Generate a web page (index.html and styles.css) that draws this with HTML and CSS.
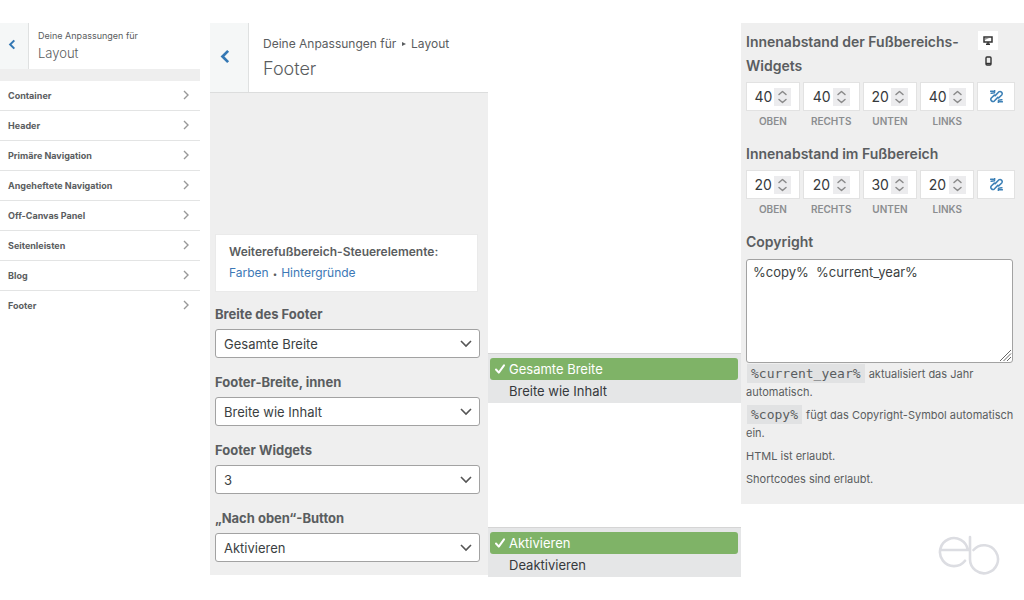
FILE: index.html
```html
<!DOCTYPE html>
<html lang="de">
<head>
<meta charset="utf-8">
<meta name="viewport" content="width=device-width, initial-scale=1">
<title>Layout – Footer</title>
<link rel="stylesheet" href="styles.css">
</head>
<body>
<svg class="defs" aria-hidden="true">
  <symbol id="back" viewBox="0 0 8 12"><path d="M6.5 1.5 2 6l4.5 4.5" fill="none" stroke="currentColor" stroke-width="2.2"/></symbol>
  <symbol id="next" viewBox="0 0 6 10"><path d="M1 1l4 4-4 4" fill="none" stroke="currentColor" stroke-width="1.4"/></symbol>
  <symbol id="tick" viewBox="0 0 10 10"><path d="M1 5.5 3.8 8.6 9 1.3" fill="none" stroke="currentColor" stroke-width="2" stroke-linecap="round" stroke-linejoin="round"/></symbol>
  <symbol id="step" viewBox="0 0 17 18"><path d="M5 6.5 8.5 3.5 12 6.5M5 11.5l3.5 3 3.5-3" fill="none" stroke="currentColor" stroke-width="1.5" stroke-linecap="round" stroke-linejoin="round"/></symbol>
  <symbol id="unlink" viewBox="0 0 12 12"><path d="M4.8 5.2 8 1.8a2 2 0 0 1 2.8 2.800L8 7.300M7.200 6.800 4 10.200a2 2 0 0 1-2.800-2.800L4 4.700M.6 1.200h2.600M1 3l2-.2M4.300.6l-.2 2M11.400 10.800H8.800M11 9l-2 .2M7.700 11.400l.2-2" fill="none" stroke="currentColor" stroke-width="1.4" stroke-linecap="round"/></symbol>
</svg>
<main class="board">
  <section class="panel sections">
    <header class="head head-small">
      <button class="back" type="button" aria-label="Zurück"><svg class="back-icon"><use href="#back"/></svg></button>
      <div class="titles"><p class="crumb">Deine Anpassungen für</p><h1 class="title">Layout</h1></div>
    </header>
    <nav class="list">
      <a class="item" href="#">Container<svg class="next"><use href="#next"/></svg></a>
      <a class="item" href="#">Header<svg class="next"><use href="#next"/></svg></a>
      <a class="item" href="#">Primäre Navigation<svg class="next"><use href="#next"/></svg></a>
      <a class="item" href="#">Angeheftete Navigation<svg class="next"><use href="#next"/></svg></a>
      <a class="item" href="#">Off-Canvas Panel<svg class="next"><use href="#next"/></svg></a>
      <a class="item" href="#">Seitenleisten<svg class="next"><use href="#next"/></svg></a>
      <a class="item" href="#">Blog<svg class="next"><use href="#next"/></svg></a>
      <a class="item" href="#">Footer<svg class="next"><use href="#next"/></svg></a>
    </nav>
  </section>

  <section class="panel footer-panel">
    <header class="head head-large">
      <button class="back" type="button" aria-label="Zurück"><svg class="back-icon"><use href="#back"/></svg></button>
      <div class="titles"><p class="crumb">Deine Anpassungen für <svg class="caret" viewBox="0 0 4 6"><path d="M0 1v4l4-2z" fill="currentColor"/></svg> Layout</p><h2 class="title">Footer</h2></div>
    </header>
    <div class="controls">
      <div class="note">
        <strong>Weiterefußbereich-Steuerelemente:</strong>
        <p class="links"><a href="#">Farben</a><span class="dot">•</span><a href="#">Hintergründe</a></p>
      </div>
      <div class="field"><label class="label" for="width">Breite des Footer</label><select class="select" id="width"><option>Gesamte Breite</option><option>Breite wie Inhalt</option></select></div>
      <div class="field"><label class="label" for="inner">Footer-Breite, innen</label><select class="select" id="inner"><option>Breite wie Inhalt</option><option>Gesamte Breite</option></select></div>
      <div class="field"><label class="label" for="widgets">Footer Widgets</label><select class="select" id="widgets"><option>3</option></select></div>
      <div class="field"><label class="label" for="top">„Nach oben“-Button</label><select class="select" id="top"><option>Aktivieren</option><option>Deaktivieren</option></select></div>
    </div>
  </section>

  <section class="menus">
    <div class="menu" role="listbox" aria-label="Breite">
      <div class="option chosen" role="option" aria-selected="true"><svg class="tick"><use href="#tick"/></svg>Gesamte Breite</div>
      <div class="option" role="option" aria-selected="false">Breite wie Inhalt</div>
    </div>
    <div class="menu" role="listbox" aria-label="Nach oben">
      <div class="option chosen" role="option" aria-selected="true"><svg class="tick"><use href="#tick"/></svg>Aktivieren</div>
      <div class="option" role="option" aria-selected="false">Deaktivieren</div>
    </div>
  </section>

  <div class="right">
    <section class="panel spacing">
      <div class="spacing-head">
        <h3 class="heading">Innenabstand der Fußbereichs-Widgets</h3>
        <div class="devices">
          <button class="device active" type="button" aria-label="Desktop"><svg width="10" height="9" viewBox="0 0 10 9"><path d="M1 1h8v5H1zM3 8.300h4M5 6v2" fill="none" stroke="currentColor" stroke-width="1.500"/><path d="M2 4l4-2H2z" fill="#999"/></svg></button>
          <button class="device" type="button" aria-label="Mobil"><svg width="7" height="10" viewBox="0 0 7 10"><rect x="1" y="1" width="5" height="8" rx="1" fill="none" stroke="currentColor" stroke-width="1.400"/><path d="M1 7.500h5" stroke="currentColor" stroke-width="1.400"/></svg></button>
        </div>
      </div>
      <div class="values">
        <div class="cell"><div class="box"><input class="number" id="a1" type="number" value="40"><svg class="step"><use href="#step"/></svg></div><label for="a1">OBEN</label></div>
        <div class="cell"><div class="box"><input class="number" id="a2" type="number" value="40"><svg class="step"><use href="#step"/></svg></div><label for="a2">RECHTS</label></div>
        <div class="cell"><div class="box"><input class="number" id="a3" type="number" value="20"><svg class="step"><use href="#step"/></svg></div><label for="a3">UNTEN</label></div>
        <div class="cell"><div class="box"><input class="number" id="a4" type="number" value="40"><svg class="step"><use href="#step"/></svg></div><label for="a4">LINKS</label></div>
        <button class="box unlink" type="button" aria-label="Werte verknüpfen"><svg width="13" height="13"><use href="#unlink"/></svg></button>
      </div>
      <h3 class="heading next-heading">Innenabstand im Fußbereich</h3>
      <div class="values">
        <div class="cell"><div class="box"><input class="number" id="b1" type="number" value="20"><svg class="step"><use href="#step"/></svg></div><label for="b1">OBEN</label></div>
        <div class="cell"><div class="box"><input class="number" id="b2" type="number" value="20"><svg class="step"><use href="#step"/></svg></div><label for="b2">RECHTS</label></div>
        <div class="cell"><div class="box"><input class="number" id="b3" type="number" value="30"><svg class="step"><use href="#step"/></svg></div><label for="b3">UNTEN</label></div>
        <div class="cell"><div class="box"><input class="number" id="b4" type="number" value="20"><svg class="step"><use href="#step"/></svg></div><label for="b4">LINKS</label></div>
        <button class="box unlink" type="button" aria-label="Werte verknüpfen"><svg width="13" height="13"><use href="#unlink"/></svg></button>
      </div>
      <label class="heading next-heading" for="copy">Copyright</label>
      <div class="area"><textarea class="text" id="copy">%copy%  %current_year%</textarea><svg class="grip" viewBox="0 0 13 13"><path d="M1 12 12 1M4.500 12 12 4.500M8 12l4-4" fill="none" stroke="#666"/></svg></div>
      <div class="help">
        <p><code>%current_year%</code> aktualisiert das Jahr automatisch.</p>
        <p><code>%copy%</code> fügt das Copyright-Symbol automatisch ein.</p>
        <p>HTML ist erlaubt.</p>
        <p>Shortcodes sind erlaubt.</p>
      </div>
    </section>
    <svg class="logo" viewBox="0 0 62 40" role="img" aria-label="eb"><path d="M2.200 15H29.800A14 14 0 1 0 27 25.700M32 2v22A14 14 0 1 0 35.500 15" fill="none" stroke="#dcdde2" stroke-width="2.600" stroke-linecap="round" stroke-linejoin="round"/></svg>
  </div>
</main>
</body>
</html>
```
FILE: styles.css
```css
* { box-sizing: border-box; }
body { margin: 0; background: #fff; color: #5a5d60; font-family: Inter, "Liberation Sans", sans-serif; }
h1, h2, h3, p { margin: 0; }
button { border: 0; padding: 0; font: inherit; }
.defs { display: none; }
.board { display: grid; grid-template-columns: 210fr 278fr 253fr 283fr; align-items: start; padding-top: 23px; }
.sections { margin-right: 10px; }

.head { display: flex; background: #fff; }
.back { display: flex; align-items: center; background: #f5f7f7; border-right: 1px solid #dfe1e1; color: #3478b4; }
.titles { display: flex; flex-direction: column; }
.title { font-weight: 300; }
.head-small { height: 46px; }
.head-small .back { width: 29px; padding-left: 8px; padding-bottom: 3px; }
.head-small .back-icon { width: 8px; height: 11px; }
.head-small .titles { padding: 5px 0 0 9px; }
.head-small .crumb { font-size: 9px; line-height: 16px; }
.head-small .title { font-size: 13px; line-height: 18px; }
.head-large { height: 70px; border-bottom: 1px solid #dcdddd; }
.head-large .back { width: 39px; padding-left: 10px; padding-bottom: 3px; }
.head-large .back-icon { width: 10px; height: 15px; }
.head-large .titles { padding: 10px 0 0 14px; }
.head-large .crumb { font-size: 12px; line-height: 22px; }
.head-large .title { font-size: 18px; line-height: 28px; }
.caret { width: 4px; height: 6px; margin: 0 2px; vertical-align: 1px; }

.list { border-top: 12px solid #eee; }
.item { display: flex; justify-content: space-between; align-items: center; height: 30px; padding: 0 11px 1px 8px; border-bottom: 1px solid #e3e4e4; color: inherit; font-size: 9px; font-weight: 700; text-decoration: none; }
.item:last-child { padding-bottom: 2px; border-bottom: 0; }
.next { width: 6px; height: 10px; color: #999; }

.footer-panel, .spacing { background: #efefef; }
.controls { display: flex; flex-direction: column; gap: 14px; padding: 141px 8px 13px 5px; }
.note { margin-right: 2px; padding: 8px 13px; background: #fff; border: 1px solid #eaeaea; font-size: 12px; line-height: 18px; }
.note strong { font-weight: 600; }
.links { padding-top: 3px; }
.links a { color: #3c78b6; text-decoration: none; }
.dot { padding: 0 4px; font-size: 8px; }
.field { display: flex; flex-direction: column; gap: 5px; }
.field:nth-child(2) { margin-top: -2px; }
.label, .heading { font-weight: 600; }
.label { font-size: 13px; font-weight: 700; line-height: 20px; }
.select { appearance: none; height: 29px; padding: 0 8px; border: 1px solid #a2a2a2; border-radius: 3px; background: #fff url("data:image/svg+xml,%3Csvg xmlns='http://www.w3.org/2000/svg' width='12' height='8'%3E%3Cpath d='M1 1l5 5 5-5' fill='none' stroke='%23555' stroke-width='1.6'/%3E%3C/svg%3E") no-repeat right 7px center; color: #3b3f42; font-family: inherit; font-size: 13px; }

.menus { display: flex; flex-direction: column; gap: 124px; padding-top: 330px; }
.menu { padding: 4px 3px 3px 2px; border-top: 1px solid #d5d5d5; background: #e5e6e7; color: #36393c; font-size: 13px; }
.option { display: flex; align-items: center; height: 21px; padding-left: 19px; border-radius: 3px; }
.chosen { height: 22px; gap: 4px; padding-left: 5px; background: #7fb367; color: #fff; }
.menu { padding-bottom: 2px; }
.tick { width: 10px; height: 10px; }

.spacing { padding: 7px 9px 16px 5px; }
.spacing-head { display: flex; justify-content: space-between; align-items: flex-start; }
.heading { font-size: 14px; line-height: 24px; }
.next-heading { display: block; margin-top: 12px; }
.devices { display: flex; flex-direction: column; gap: 1px; padding: 1px 17px 0 0; }
.device { display: grid; place-items: center; width: 20px; height: 19px; background: none; color: #333; }
.device.active { background: #fff; }
.values { display: grid; grid-template-columns: 54fr 57fr 55fr 54fr 38fr; gap: 3px; align-items: start; padding-top: 4px; }
.cell { display: flex; flex-direction: column; min-width: 0; }
.cell label { padding-top: 2px; padding-bottom: 1px; color: #8b8d8f; font-size: 10px; font-weight: 600; line-height: 16px; text-align: center; }
.box { display: flex; align-items: center; justify-content: center; height: 29px; border: 1px solid #e2e2e2; background: #fff; }
.number { appearance: textfield; width: 20px; padding: 0; border: 0; background: none; color: #36393c; font-family: inherit; font-size: 14px; }
.number::-webkit-inner-spin-button { appearance: none; margin: 0; }
.step { width: 17px; height: 18px; background: #ececee; color: #8a8a8a; }
.unlink { color: #3c80b6; }
.area { position: relative; display: flex; padding-top: 5px; margin-right: 2px; }
.text { width: 100%; height: 104px; padding: 2px 6px; border: 1px solid #a2a2a2; border-radius: 3px; color: #3b3f42; font-family: inherit; font-size: 13px; line-height: 20px; resize: none; }
.grip { position: absolute; right: 1px; bottom: 1px; width: 13px; height: 13px; }
.help { display: flex; flex-direction: column; gap: 5px; padding-top: 2px; font-size: 11px; line-height: 18px; }
.help code { margin: 0 1px; padding: 2px 4px; background: #e1e2e3; font-family: "DejaVu Sans Mono", monospace; font-size: 13px; line-height: 18px; }
.logo { display: block; width: 62px; height: 40px; margin: 31px 24px 0 auto; }
```
